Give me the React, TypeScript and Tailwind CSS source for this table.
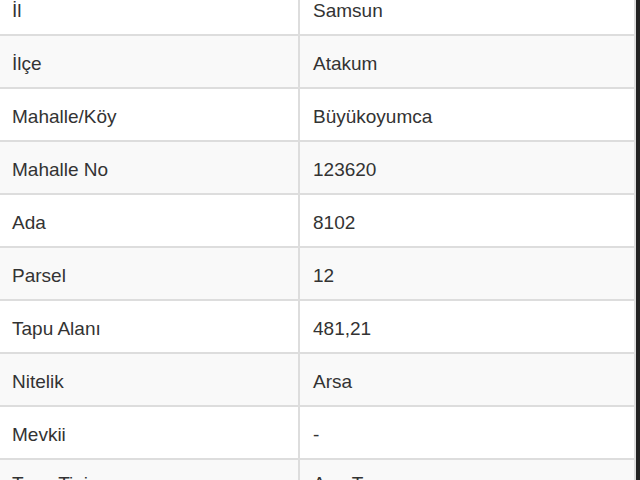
const ROWS: [string, string][] = [
  ["İl", "Samsun"],
  ["İlçe", "Atakum"],
  ["Mahalle/Köy", "Büyükoyumca"],
  ["Mahalle No", "123620"],
  ["Ada", "8102"],
  ["Parsel", "12"],
  ["Tapu Alanı", "481,21"],
  ["Nitelik", "Arsa"],
  ["Mevkii", "-"],
  ["Tapu Tipi", "Ana Taşınmaz"],
];

export default function App() {
  return (
    <div className="flex h-[480px] w-[640px] overflow-hidden bg-white font-['Liberation_Sans',Arial,sans-serif] text-[19px] text-[#333]">
      <div className="-mt-[17px] w-[636px] border-r-2 border-[#dddddd]">
        {ROWS.map(([k, v], i) => {
          // last row is cut by the window, its text sits a bit higher
          const cell = i === ROWS.length - 1 ? "items-start pt-[10px]" : "items-center pt-[5px]";
          return (
            <div
              key={k}
              className={
                "flex h-[53px] border-b-2 border-[#dddddd] " +
                (i % 2 === 1 ? "bg-[#f9f9f9]" : "bg-white")
              }
            >
              <div className={"flex w-[300px] border-r-2 border-[#dddddd] pl-[12px] " + cell}>{k}</div>
              <div className={"flex flex-1 pl-[13px] " + cell}>{v}</div>
            </div>
          );
        })}
      </div>
      <div className="w-[4px] bg-[#222]" />
    </div>
  );
}
